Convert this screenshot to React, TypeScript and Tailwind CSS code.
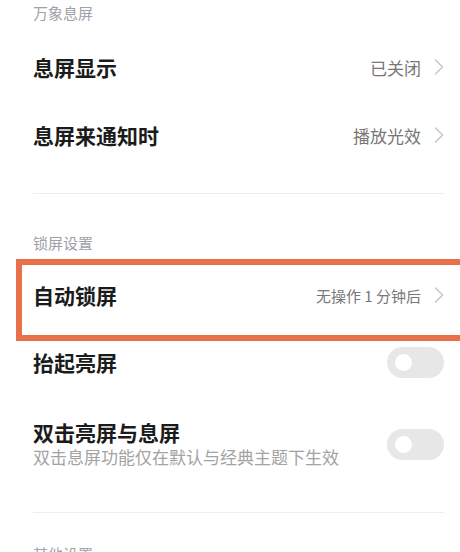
import { Fragment } from "react"

const font = { fontFamily: '"Noto Sans CJK SC", "Noto Sans", sans-serif' }

// chevron on the right of a link row

const Chevron = () => (
    <svg width="10" height="16" viewBox="0 0 10 16" fill="none" className="shrink-0">
        <path d="M1.5 1L8.5 8L1.5 15" stroke="#c4c4c4" strokeWidth="1.4" strokeLinecap="round" strokeLinejoin="round" />
    </svg>
)

const Toggle = () => (
    <div className="relative w-[57px] h-[31px] rounded-full bg-[#e7e7e7] shrink-0">
        <div className="absolute left-[8px] top-[7px] w-[17px] h-[17px] rounded-full bg-white"></div>
    </div>
)

interface LinkRowProps {
    title: string;
    value: string;
    height: string;
    small?: boolean;
}

const LinkRow = ({ title, value, height, small }: LinkRowProps) => (
    <div className={`flex flex-row items-center justify-between ${height}`}>
        <span className="text-[21px] font-bold text-[#1b1b1b] leading-none">{title}</span>
        <div className="flex flex-row items-center gap-[13px]">
            <span className={`${small ? "text-[15px]" : "text-[17px]"} text-[#777777] leading-none`}>{value}</span>
            <Chevron />
        </div>
    </div>
)

const SectionHeader = ({ label, height }: { label: string; height: string }) => (
    <div className={`flex items-center ${height}`}>
        <span className="text-[15px] text-[#9da1a9] leading-none">{label}</span>
    </div>
)

const App = () => {

    const dividers = ["h-[33px]", "h-[43px]"]

    return (
        <div className="w-[460px] h-[552px] overflow-hidden bg-white" style={font}>
            <div className="pl-[33px] pr-[16px] flex flex-col">

                {/* 万象息屏 */}

                <SectionHeader label="万象息屏" height="h-[24px]" />
                <LinkRow title="息屏显示" value="已关闭" height="h-[86px]" />
                <LinkRow title="息屏来通知时" value="播放光效" height="h-[50px]" />
                <div className={dividers[0]}></div>
                <div className="w-full h-[1px] bg-[#ececec]"></div>

                {/* 锁屏设置 */}

                <div className="h-[32px]"></div>
                <SectionHeader label="锁屏设置" height="h-[32px]" />
                <div className="relative">
                    <LinkRow title="自动锁屏" value="无操作 1 分钟后" height="h-[74px]" small />
                    <div className="absolute left-[-17px] right-[-40px] top-[1px] h-[82px] border-[6px] border-[#e8704a]"></div>
                </div>
                <div className="flex flex-row items-center justify-between h-[60px]">
                    <span className="text-[21px] font-bold text-[#1b1b1b] leading-none">抬起亮屏</span>
                    <Toggle />
                </div>
                <div className="flex flex-row items-center justify-between pt-[27px]">
                    <div className="flex flex-col">
                        <span className="text-[21px] font-bold text-[#1b1b1b] leading-[26px]">双击亮屏与息屏</span>
                        <span className="text-[17px] text-[#a3a3a3] leading-[24px]">双击息屏功能仅在默认与经典主题下生效</span>
                    </div>
                    <Toggle />
                </div>
                <div className={dividers[1]}></div>
                <div className="w-full h-[1px] bg-[#ececec]"></div>

                {/* next section, cut off at the bottom */}

                <Fragment>
                    <div className="h-[33px]"></div>
                    <span className="text-[15px] text-[#9da1a9] leading-none">其他设置</span>
                </Fragment>
            </div>
        </div>
    )
}

export default App
